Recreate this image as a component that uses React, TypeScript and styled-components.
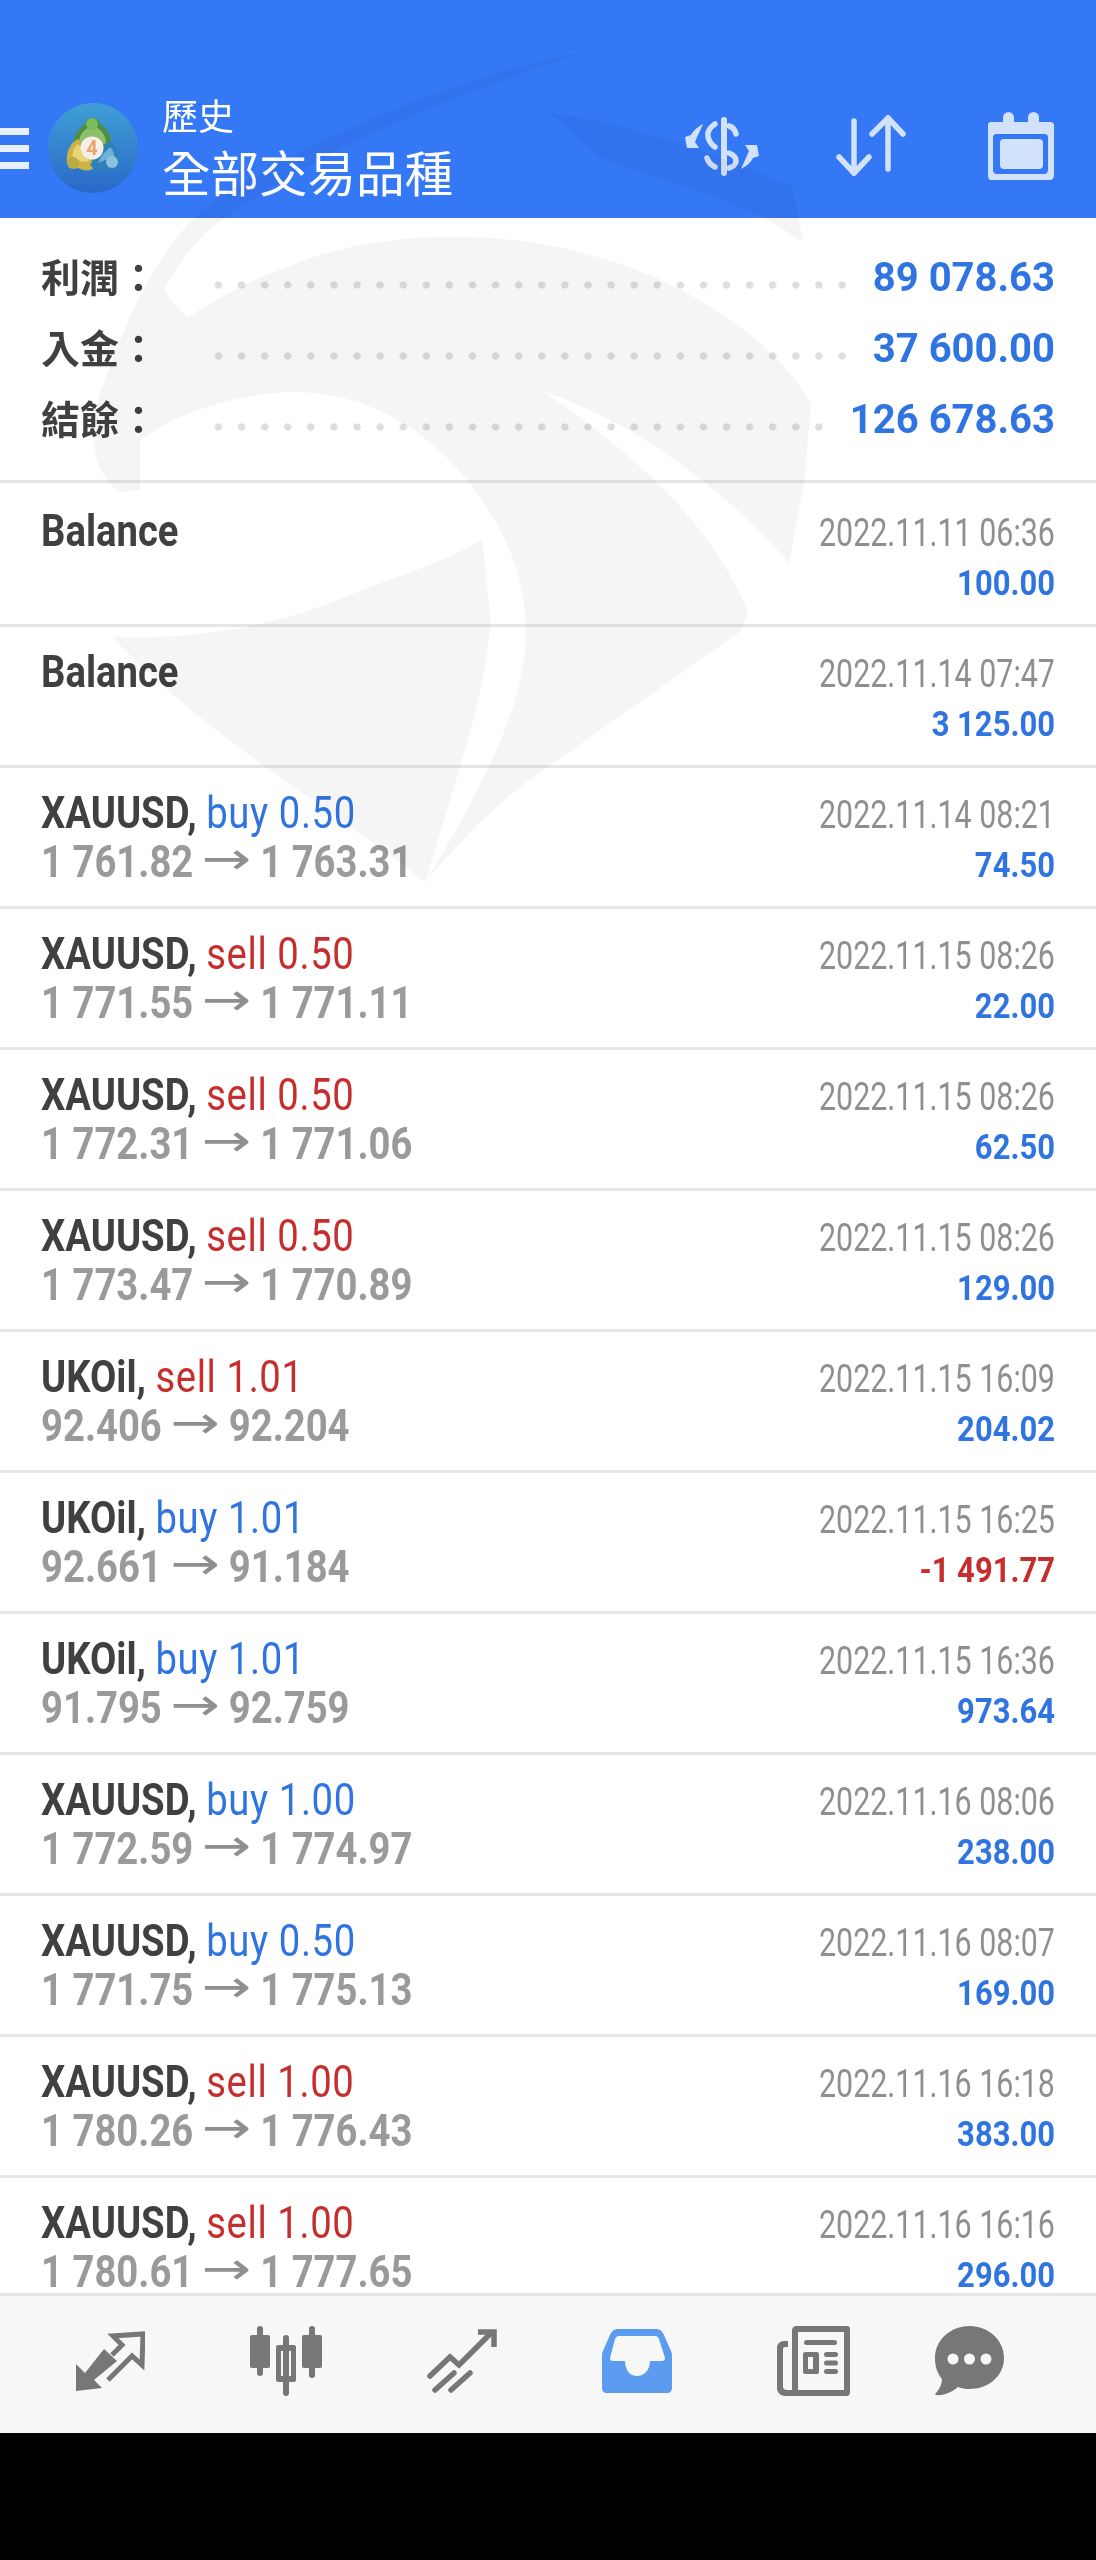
import styled, { createGlobalStyle } from "styled-components";

const GlobalStyle = createGlobalStyle`
    html, body {
        margin: 0;
        padding: 0;
        background: #000;
    }
    * {
        box-sizing: border-box;
    }
`;

const Page = styled.div`
    position: relative;
    width: 1096px;
    height: 2560px;
    display: flex;
    flex-direction: column;
    overflow: hidden;
    background: #fff;
    font-family: Roboto, "Noto Sans CJK TC", sans-serif;
`;

const Watermark = styled.svg`
    position: absolute;
    left: 0;
    top: 0;
    pointer-events: none;
    mix-blend-mode: multiply;
`;

const Header = styled.header`
    flex: none;
    height: 218px;
    padding: 78px 42px 0 0;
    display: flex;
    align-items: center;
    background: #3478f6;
    color: #fff;
`;

const Burger = styled.div`
    width: 29px;
    margin-right: 19px;
    display: flex;
    flex-direction: column;
    gap: 10px;
    span {
        display: block;
        height: 7px;
        background: #e8f0fe;
    }
`;

const Logo = styled.svg`
    flex: none;
    margin-right: 24px;
`;

const Titles = styled.div`
    display: flex;
    flex-direction: column;
    gap: 5px;
    padding-bottom: 3px;
    font-family: "Noto Sans CJK TC", sans-serif;
`;

const Subtitle = styled.div`
    font-size: 36px;
    line-height: 44px;
`;

const Title = styled.div`
    font-size: 48.5px;
    line-height: 60px;
`;

const Actions = styled.div`
    margin-left: auto;
    display: flex;
    align-items: center;
`;

const ActionIcon = styled.svg<{ $gap: number }>`
    display: block;
    margin-left: ${(p) => p.$gap}px;
    margin-top: -4px;
`;

const Summary = styled.section`
    flex: none;
    height: 265px;
    padding: 24px 41px 0;
    border-bottom: 3px solid #e6e6e6;
`;

const SummaryRow = styled.div`
    height: 71px;
    display: flex;
    align-items: center;
`;

const SummaryLabel = styled.div`
    flex: none;
    width: 166px;
    padding-bottom: 6px;
    font-family: "Noto Sans CJK TC", sans-serif;
    font-size: 39px;
    font-weight: 700;
    color: #404040;
`;

const Leader = styled.div`
    flex: 1;
    height: 8px;
    margin: 14px 26px 0 0;
    background: radial-gradient(circle at 11.5px 4px, #dedede 3.4px, transparent 3.9px) 0 0 / 23.1px 8px repeat-x;
`;

const SummaryValue = styled.div`
    flex: none;
    font-size: 40px;
    font-weight: 700;
    color: #2f74e0;
`;

const List = styled.div`
    flex: 1;
    min-height: 0;
    padding-top: 3px;
    overflow: hidden;
`;

const Row = styled.div`
    height: 141px;
    padding: 20px 41px 0;
    display: flex;
    justify-content: space-between;
    border-bottom: 3px solid #e6e6e6;
`;

const Left = styled.div`
    transform: scaleX(0.85);
    transform-origin: left top;
    white-space: nowrap;
    font-size: 45px;
    line-height: 49px;
`;

const Symbol = styled.span`
    font-weight: 700;
    color: #404040;
`;

const Side = styled.span<{ $sell: boolean }>`
    letter-spacing: 0.7px;
    color: ${(p) => (p.$sell ? "#c62e2e" : "#2f74e0")};
`;

const Prices = styled.div`
    font-weight: 700;
    color: #999a9c;
`;

const Arrow = styled.span`
    display: inline-block;
    transform: scaleX(1.55);
    margin: 0 21px 0 20px;
    vertical-align: 3px;
    font-family: "DejaVu Sans", sans-serif;
    font-weight: 400;
    line-height: 36px;
    color: #8f8f8f;
`;

const Right = styled.div`
    padding-top: 3px;
    white-space: nowrap;
    text-align: right;
    line-height: 49px;
`;

const Time = styled.div`
    transform: scaleX(0.8);
    transform-origin: right top;
    font-size: 38px;
    color: #8f8f8f;
`;

const Profit = styled.div<{ $loss: boolean }>`
    transform: scaleX(0.885);
    transform-origin: right top;
    margin-top: 1px;
    font-size: 35px;
    font-weight: 700;
    color: ${(p) => (p.$loss ? "#c62e2e" : "#2f74e0")};
`;

const Nav = styled.nav`
    flex: none;
    height: 140px;
    padding: 0 0 8px 75px;
    display: flex;
    align-items: center;
    gap: 105px;
    background: #f7f7f7;
    border-top: 3px solid #e6e6e6;
`;

const NavIcon = styled.svg<{ $pull?: number }>`
    display: block;
    flex: none;
    margin-left: ${(p) => -(p.$pull ?? 0)}px;
`;

const BlackBar = styled.div`
    flex: none;
    height: 127px;
    background: #000;
`;

const rows = [
    { symbol: "Balance", time: "2022.11.11 06:36", profit: "100.00" },
    { symbol: "Balance", time: "2022.11.14 07:47", profit: "3 125.00" },
    { symbol: "XAUUSD", side: "buy 0.50", from: "1 761.82", to: "1 763.31", time: "2022.11.14 08:21", profit: "74.50" },
    { symbol: "XAUUSD", side: "sell 0.50", from: "1 771.55", to: "1 771.11", time: "2022.11.15 08:26", profit: "22.00" },
    { symbol: "XAUUSD", side: "sell 0.50", from: "1 772.31", to: "1 771.06", time: "2022.11.15 08:26", profit: "62.50" },
    { symbol: "XAUUSD", side: "sell 0.50", from: "1 773.47", to: "1 770.89", time: "2022.11.15 08:26", profit: "129.00" },
    { symbol: "UKOil", side: "sell 1.01", from: "92.406", to: "92.204", time: "2022.11.15 16:09", profit: "204.02" },
    { symbol: "UKOil", side: "buy 1.01", from: "92.661", to: "91.184", time: "2022.11.15 16:25", profit: "-1 491.77" },
    { symbol: "UKOil", side: "buy 1.01", from: "91.795", to: "92.759", time: "2022.11.15 16:36", profit: "973.64" },
    { symbol: "XAUUSD", side: "buy 1.00", from: "1 772.59", to: "1 774.97", time: "2022.11.16 08:06", profit: "238.00" },
    { symbol: "XAUUSD", side: "buy 0.50", from: "1 771.75", to: "1 775.13", time: "2022.11.16 08:07", profit: "169.00" },
    { symbol: "XAUUSD", side: "sell 1.00", from: "1 780.26", to: "1 776.43", time: "2022.11.16 16:18", profit: "383.00" },
    { symbol: "XAUUSD", side: "sell 1.00", from: "1 780.61", to: "1 777.65", time: "2022.11.16 16:16", profit: "296.00" },
];

const summary = [
    { label: "利潤：", value: "89 078.63" },
    { label: "入金：", value: "37 600.00" },
    { label: "結餘：", value: "126 678.63" },
];

// big faint logo behind the header and the list
const watermarkShapes = (
    <>
        <path d="M587 52C480 70 340 125 230 190C175 222 135 290 98 400C90 440 92 470 119 492L140 490L140 441C170 415 240 392 294 392C392 392 470 460 510 551C530 600 530 650 515 700C500 750 470 810 425 882C470 830 510 790 559 759L741 631L748 612C720 545 670 480 545 392C640 425 725 490 789 563L804 484L811 404C790 365 750 330 699 300C640 265 560 240 472 237C410 235 350 243 300 262C260 277 220 295 189 317C180 312 170 300 164 290C180 260 200 235 224 218C320 150 450 95 587 52Z" />
        <path d="M112 637C200 640 280 625 350 595C400 575 450 560 482 539L490 612C490 680 465 750 425 882C350 820 210 741 112 637Z" />
        <path d="M548 113C620 120 720 155 793 187L803 242L772 222C720 195 650 178 600 157Z" />
    </>
);

function MtLogo() {
    return (
        <Logo width="90" height="90" viewBox="0 0 90 90">
            <defs>
                <linearGradient id="logoBg" x1="0" y1="0" x2="0" y2="1">
                    <stop offset="0" stopColor="#3f9fd6" />
                    <stop offset="1" stopColor="#2a68c8" />
                </linearGradient>
            </defs>
            <circle cx="45" cy="45" r="45" fill="url(#logoBg)" />
            <path d="M26 42C25 30 33 24 37 21C37 13 52 13 52 21C57 24 64 31 63 42L45 50Z" fill="#4f8f45" />
            <path d="M31 40C31 31 37 26 42 24C44 28 47 28 48 24C53 27 58 32 58 40L45 46Z" fill="#8cc06c" />
            <circle cx="44" cy="21" r="6" fill="#7cbb5d" />
            <path d="M41 50L30 36C22 40 19 48 19 55C17 61 24 67 30 65C36 68 42 69 47 64Z" fill="#cdb343" />
            <path d="M38 50L30 41C25 45 24 50 25 54C30 58 36 60 41 58Z" fill="#e8d375" />
            <circle cx="25" cy="60" r="6" fill="#b9ab44" />
            <path d="M50 48L62 38C70 43 72 52 71 58C72 65 64 69 58 67C52 69 46 67 42 62Z" fill="#2f7fb8" />
            <path d="M54 52L62 44C66 48 67 53 66 57C60 54 56 58 50 60Z" fill="#6fb1d6" />
            <circle cx="64" cy="59" r="6" fill="#8cc3dc" />
            <circle cx="44" cy="45" r="11.5" fill="#f6efe9" />
            <text x="44" y="52" textAnchor="middle" fontSize="20" fontWeight="700" fontFamily="Roboto, sans-serif" fill="#e9a56a">4</text>
        </Logo>
    );
}

function DollarIcon() {
    const arrow = "M19 7C13 10 9 14 7 18L1 20L3 31L15 31L11 25C13 20 16 14 19 7Z";
    return (
        <ActionIcon $gap={0} width="76" height="59" viewBox="0 0 76 59">
            <g fill="#d2e2fb">
                <rect x="37" y="0" width="6" height="59" rx="3" />
                <path d={arrow} />
                <path d={arrow} transform="rotate(180 38 29.5)" />
            </g>
            <g fill="none" stroke="#d2e2fb" strokeWidth="5.5" strokeLinecap="round">
                <path d="M45 9C49 10 51 13 52 17" />
                <path d="M31 7C25 11 23 15 24 20C25 24 28 28 31 30" />
                <path d="M23 41C24 45 27 48 31 50" />
                <path d="M45 36C50 38 52 41 52 44C52 47 49 50 45 51" />
            </g>
        </ActionIcon>
    );
}

function SortIcon() {
    return (
        <ActionIcon $gap={76} width="70" height="62" viewBox="0 0 70 62" fill="none" stroke="#d2e2fb" strokeWidth="5.5" strokeLinecap="round" strokeLinejoin="round">
            <path d="M18 6V58" />
            <path d="M3 42L18 58L33 42" />
            <path d="M52 3V54" />
            <path d="M36 19L52 3L67 19" />
        </ActionIcon>
    );
}

function CalendarIcon() {
    return (
        <ActionIcon $gap={82} width="66" height="68" viewBox="0 0 66 68">
            <path
                fillRule="evenodd"
                fill="#d2e2fb"
                d="M3 10H62C64 10 66 11 66 13V64C66 66 64 68 62 68H3C1 68 0 66 0 64V13C0 11 1 10 3 10ZM9 22C6 22 5 23 5 26V57C5 60 6 62 9 62H56C59 62 60 60 60 57V26C60 23 59 22 56 22Z"
            />
            <rect x="12" y="27" width="43" height="30" rx="4" fill="#d2e2fb" />
            <rect x="15" y="0" width="11" height="15" rx="5.5" fill="#d2e2fb" />
            <rect x="40" y="0" width="11" height="15" rx="5.5" fill="#d2e2fb" />
        </ActionIcon>
    );
}

function TradeIcon() {
    return (
        <NavIcon width="70" height="60" viewBox="0 0 70 60" fill="#777">
            <path d="M1 33V60L27 57L19 49L42 30L29 18L10 42Z" />
            <path d="M33 49L57 25L67 34L68 3L38 5L47 14L37 24" fill="none" stroke="#777" strokeWidth="5" />
        </NavIcon>
    );
}

function CandleIcon() {
    return (
        <NavIcon width="72" height="70" viewBox="0 0 72 70" fill="#777">
            <rect x="7" y="0" width="6" height="50" rx="3" />
            <rect x="0" y="9" width="20" height="33" rx="2" />
            <rect x="33" y="9" width="6" height="61" rx="3" />
            <path fillRule="evenodd" d="M28 19H44C45 19 46 20 46 21V54C46 55 45 56 44 56H28C27 56 26 55 26 54V21C26 20 27 19 28 19ZM31 25V50H41V25Z" />
            <rect x="59" y="0" width="6" height="52" rx="3" />
            <rect x="52" y="9" width="20" height="33" rx="2" />
        </NavIcon>
    );
}

function ChartIcon() {
    return (
        <NavIcon width="70" height="64" viewBox="0 0 70 64" fill="none" stroke="#777" strokeWidth="5.5" strokeLinecap="round">
            <path d="M3 47L23 28L32 36L63 5" />
            <path d="M51 3H67V18" strokeLinecap="butt" />
            <path d="M8 61L27 44" />
            <path d="M24 61L43 44" />
        </NavIcon>
    );
}

function InboxIcon() {
    return (
        <NavIcon width="70" height="64" viewBox="0 0 70 64" fill="#5b9bf0">
            <path
                fillRule="evenodd"
                d="M16 0H54C58 0 60 2 62 6L69 22C70 24 70 26 70 28V59C70 62 68 64 65 64H5C2 64 0 62 0 59V28C0 26 0 24 1 22L8 6C10 2 12 0 16 0ZM17 7C15 7 14 8 13 10L8 29C8 31 9 32 11 32H23C23 41 28 47 35 47C42 47 48 41 48 32H60C62 32 63 31 63 29L57 10C56 8 55 7 53 7Z"
            />
        </NavIcon>
    );
}

function NewsIcon() {
    return (
        <NavIcon width="73" height="70" viewBox="0 0 73 70" fill="#777">
            <path
                fillRule="evenodd"
                d="M19 0H70C72 0 73 1 73 3V66C73 68 72 70 70 70H8C3 70 0 66 0 62V22C0 18 3 15 7 15H11V21H8C7 21 6 22 6 23V61C6 63 8 64 10 64H15V4C15 2 17 0 19 0ZM21 6V64H67V6Z"
            />
            <rect x="27" y="14" width="33" height="5" rx="2.5" />
            <path fillRule="evenodd" d="M28 26H40C41 26 42 27 42 28V46C42 47 41 48 40 48H28C27 48 26 47 26 46V28C26 27 27 26 28 26ZM31 31V43H36V31Z" />
            <rect x="47" y="26" width="14" height="5" rx="2.5" />
            <rect x="47" y="34.5" width="14" height="5" rx="2.5" />
            <rect x="47" y="43" width="14" height="5" rx="2.5" />
        </NavIcon>
    );
}

function ChatIcon() {
    return (
        <NavIcon $pull={20} width="69" height="70" viewBox="0 0 69 70" fill="#777">
            <path d="M34.5 0C53.5 0 69 14 69 32C69 50 53.5 63 34.5 63C30 63 27 62.5 23 61C17 66 9 70 1 69C0 69 0 68 1 67C5 62 7 58 7 53C2 47 0 40 0 32C0 14 15.5 0 34.5 0Z" />
            <circle cx="18" cy="33" r="5.5" fill="#f7f7f7" />
            <circle cx="34.5" cy="33" r="5.5" fill="#f7f7f7" />
            <circle cx="51" cy="33" r="5.5" fill="#f7f7f7" />
        </NavIcon>
    );
}

export default function App() {
    return (
        <>
            <GlobalStyle />
            <Page>
                <Header>
                    <Burger>
                        <span />
                        <span />
                        <span />
                    </Burger>
                    <MtLogo />
                    <Titles>
                        <Subtitle>歷史</Subtitle>
                        <Title>全部交易品種</Title>
                    </Titles>
                    <Actions>
                        <DollarIcon />
                        <SortIcon />
                        <CalendarIcon />
                    </Actions>
                </Header>
                <Summary>
                    {summary.map((item) => (
                        <SummaryRow key={item.label}>
                            <SummaryLabel>{item.label}</SummaryLabel>
                            <Leader />
                            <SummaryValue>{item.value}</SummaryValue>
                        </SummaryRow>
                    ))}
                </Summary>
                <List>
                    {rows.map((row, i) => (
                        <Row key={i}>
                            <Left>
                                <div>
                                    <Symbol>
                                        {row.symbol}
                                        {row.side ? ", " : ""}
                                    </Symbol>
                                    {row.side && <Side $sell={row.side.startsWith("sell")}>{row.side}</Side>}
                                </div>
                                {row.from && (
                                    <Prices>
                                        {row.from}
                                        <Arrow>→</Arrow>
                                        {row.to}
                                    </Prices>
                                )}
                            </Left>
                            <Right>
                                <Time>{row.time}</Time>
                                <Profit $loss={row.profit.startsWith("-")}>{row.profit}</Profit>
                            </Right>
                        </Row>
                    ))}
                </List>
                <Nav>
                    <TradeIcon />
                    <CandleIcon />
                    <ChartIcon />
                    <InboxIcon />
                    <NewsIcon />
                    <ChatIcon />
                </Nav>
                <BlackBar />
                <Watermark width="1096" height="960" viewBox="0 0 1096 960" fill="#f5f5f6">
                    {watermarkShapes}
                </Watermark>
            </Page>
        </>
    );
}
